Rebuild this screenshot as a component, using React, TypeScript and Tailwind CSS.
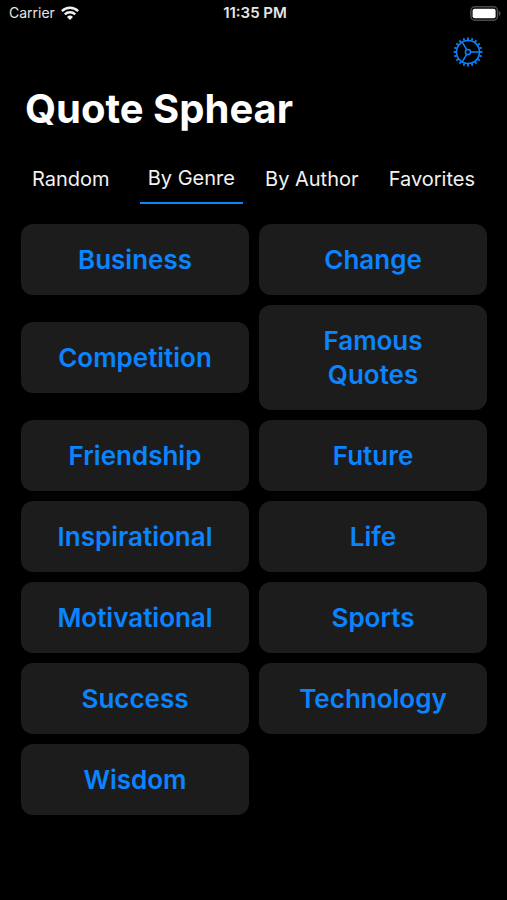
import React from "react";

const tabs = ["Random", "By Genre", "By Author", "Favorites"];

const genres = [
  "Business",
  "Change",
  "Competition",
  "Famous Quotes",
  "Friendship",
  "Future",
  "Inspirational",
  "Life",
  "Motivational",
  "Sports",
  "Success",
  "Technology",
  "Wisdom",
];

function WifiIcon() {
  return (
    <svg viewBox="0 0 18 14" className="h-[14px] w-[18px]" fill="none" stroke="#f2f2f2" strokeWidth="2.4" aria-hidden="true">
      <path d="M0.9 5.1a11.6 11.6 0 0 1 16.2 0" />
      <path d="M3.8 8.3a7.5 7.5 0 0 1 10.4 0" />
      <path d="M9 13.9 6 11a4.3 4.3 0 0 1 6 0z" fill="#f2f2f2" stroke="none" />
    </svg>
  );
}

function BatteryIcon() {
  return (
    <svg viewBox="0 0 31 15" className="h-[15px] w-[31px]" aria-hidden="true">
      <rect x="0.9" y="0.8" width="26.6" height="13.4" rx="4" fill="none" stroke="#4c4c4c" strokeWidth="1.5" />
      <rect x="2.6" y="2.7" width="23" height="9.6" rx="2" fill="#fff" />
      <path d="M28.8 5.100c1.200.4 1.800 1.300 1.800 2.400s-.6 2-1.800 2.400z" fill="#4c4c4c" />
    </svg>
  );
}

function GearIcon() {
  const teeth = Array.from({ length: 20 }, (_, i) => i * 18);
  return (
    <svg viewBox="-15 -15 30 30" className="size-[30px]" fill="none" stroke="#0a84ff" strokeWidth="1.5" aria-hidden="true">
      <circle r="11.5" />
      {teeth.map((angle) => (
        <path key={angle} d="M12 0H14.400" strokeWidth="1.800" transform={`rotate(${angle})`} />
      ))}
      <circle r="2.600" />
      {[0, 120, 240].map((angle) => (
        <path key={angle} d="M2.600 0H11.500" transform={`rotate(${angle})`} />
      ))}
    </svg>
  );
}

export default function App() {
  return (
    <div className="min-h-screen bg-black font-['Inter',sans-serif] text-white">
      <header>
        <div className="grid h-[26px] grid-cols-3 items-center pr-[6px] pl-[9px] text-sm text-[#e6e6e6]">
          <div className="flex items-center gap-[6px]">
            <span>Carrier</span>
            <WifiIcon />
          </div>
          <span className="text-center text-[15px] font-semibold">11:35 PM</span>
          <div className="flex justify-end">
            <BatteryIcon />
          </div>
        </div>
        <div className="flex justify-end pt-[11px] pr-6">
          <button type="button" aria-label="Settings">
            <GearIcon />
          </button>
        </div>
        <h1 className="mt-[17px] px-[25px] text-[40px] leading-[50px] font-bold">Quote Sphear</h1>
      </header>

      <nav className="mt-[27px] flex justify-between px-6" aria-label="Quote sections">
        {tabs.map((tab) => {
          const active = tab === "By Genre";
          return (
            <button
              key={tab}
              type="button"
              aria-current={active ? "page" : undefined}
              className={`h-[43px] px-2 pb-2 text-xl whitespace-nowrap text-[#f2f2f2] first:mr-2 ${
                active ? "border-b-2 border-[#0a84ff]" : ""
              }`}
            >
              {tab}
            </button>
          );
        })}
      </nav>

      <main className="mt-5 grid grid-cols-2 items-center gap-[10px] pr-5 pb-8 pl-[21px]">
        {genres.map((genre) => (
          <button
            key={genre}
            type="button"
            className="rounded-xl bg-[#1c1c1c] px-8 pt-[19px] pb-[18px] text-[26px] leading-[34px] font-semibold text-[#0a84ff]"
          >
            {genre}
          </button>
        ))}
      </main>
    </div>
  );
}
